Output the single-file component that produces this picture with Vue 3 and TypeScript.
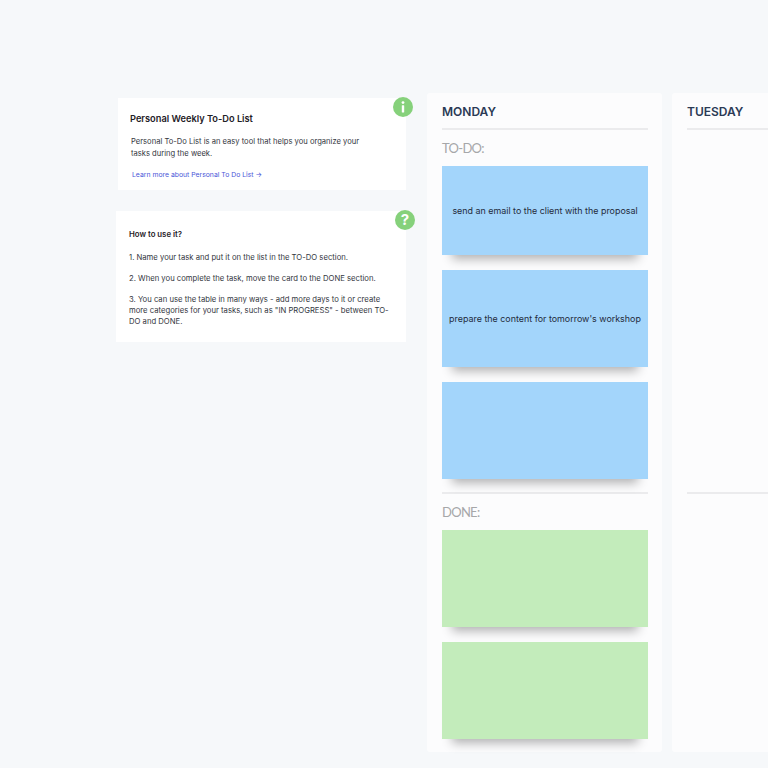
<script setup lang="ts">
interface Note { text: string; tall?: boolean }
const todo: Note[] = [
  { text: 'send an email to the client with the proposal' },
  { text: "prepare the content for tomorrow's workshop", tall: true },
  { text: '', tall: true },
]
const done: Note[] = [{ text: '' }, { text: '' }]
const howTo: string[] = [
  '1. Name your task and put it on the list in the TO-DO section.',
  '2. When you complete the task, move the card to the DONE section.',
  '3. You can use the table in many ways - add more days to it or create more categories for your tasks, such as "IN PROGRESS" - between TO-DO and DONE.',
]
</script>

<template>
  <div class="page">
    <aside class="side">
      <section class="info first">
        <span class="badge badge-i">
          <svg width="20" height="20" viewBox="0 0 20 20"><circle cx="10" cy="5.6" r="1.4" fill="#fff" /><rect x="8.8" y="8.2" width="2.4" height="7.4" rx="0.6" fill="#fff" /></svg>
        </span>
        <h1>Personal Weekly To-Do List</h1>
        <p class="desc">Personal To-Do List is an easy tool that helps you organize your tasks during the week.</p>
        <a class="more">Learn more about Personal To Do List →</a>
      </section>
      <section class="info second">
        <span class="badge badge-q">?</span>
        <h2>How to use it?</h2>
        <p v-for="line in howTo" :key="line" class="step">{{ line }}</p>
      </section>
    </aside>

    <section class="day">
      <h3>MONDAY</h3>
      <div class="zone todo">
        <h4>TO-DO:</h4>
        <div v-for="(n, i) in todo" :key="i" class="note blue" :class="{ tall: n.tall }">{{ n.text }}</div>
      </div>
      <div class="zone done">
        <h4>DONE:</h4>
        <div v-for="(n, i) in done" :key="i" class="note green tall">{{ n.text }}</div>
      </div>
    </section>

    <section class="day">
      <h3>TUESDAY</h3>
      <div class="zone todo"></div>
      <div class="zone done"></div>
    </section>
  </div>
</template>

<style>
html, body { margin: 0; background: #f6f8fa; }
</style>

<style scoped>
.page {
  box-sizing: border-box;
  width: 768px;
  height: 768px;
  overflow: hidden;
  display: flex;
  align-items: flex-start;
  padding: 93px 0 0 116px;
  background: #f6f8fa;
  font-family: Inter, "Liberation Sans", sans-serif;
}
.side {
  flex: 0 0 290px;
  display: flex;
  flex-direction: column;
  padding-top: 5px;
  gap: 21px;
}
.info {
  position: relative;
  box-sizing: border-box;
  background: #fff;
}
.first {
  margin-left: 2px;
  height: 92px;
  padding: 14px 12px 0;
}
.second {
  height: 131px;
  padding: 17px 13px 0;
}
.badge {
  position: absolute;
  width: 20px;
  height: 20px;
  border-radius: 50%;
  background: #86d17b;
  color: #fff;
  display: flex;
  align-items: center;
  justify-content: center;
}
.badge-i { top: -1px; right: -7px; }
.badge-q {
  top: -1px;
  right: -9px;
  font-size: 15px;
  font-weight: 700;
  line-height: 20px;
}
h1 {
  margin: 0;
  font-size: 9.25px;
  line-height: 14px;
  font-weight: 600;
  color: #1f2127;
}
.desc {
  margin: 10px 0 0 1px;
  width: 240px;
  font-size: 7.6px;
  line-height: 12px;
  color: #33363e;
}
.more {
  display: block;
  margin: 10px 0 0 2px;
  font-size: 6.85px;
  line-height: 10px;
  color: #4a56d8;
}
h2 {
  margin: 0 0 12px;
  font-size: 7.8px;
  line-height: 12px;
  font-weight: 600;
  color: #1f2127;
}
.step {
  margin: 0 0 10px;
  font-size: 7.7px;
  line-height: 11px;
  color: #33363e;
}
.day {
  flex: 0 0 235px;
  box-sizing: border-box;
  height: 659px;
  margin-left: 21px;
  padding: 0 14px 0 15px;
  background: #fcfcfd;
  border-radius: 3px;
}
.day + .day { margin-left: 10px; }
h3 {
  box-sizing: border-box;
  margin: 0;
  height: 37px;
  padding-top: 11px;
  font-size: 12px;
  line-height: 15px;
  font-weight: 600;
  color: #2b3a55;
  border-bottom: 2px solid #ebebed;
}
.zone { box-sizing: border-box; }
.todo {
  height: 364px;
  border-bottom: 2px solid #ebebed;
}
h4 {
  margin: 0;
  height: 35px;
  padding-top: 9px;
  box-sizing: border-box;
  font-family: Lato, "Liberation Sans", sans-serif;
  font-size: 13px;
  line-height: 18px;
  font-weight: 400;
  letter-spacing: -0.7px;
  color: #a6a7a9;
}
.note {
  display: flex;
  align-items: center;
  justify-content: center;
  height: 89px;
  margin-bottom: 15px;
  box-sizing: border-box;
  font-size: 8.92px;
  color: #232b3b;
  text-align: center;
  box-shadow: 0 14px 10px -10px rgba(0, 0, 0, 0.3);
}
.note.tall { height: 97px; }
.todo h4 + .note { margin-top: 1px; }
.done h4 { height: 36px; }
.blue { background: #a3d5fb; }
.green { background: #c3ecbb; }
</style>
